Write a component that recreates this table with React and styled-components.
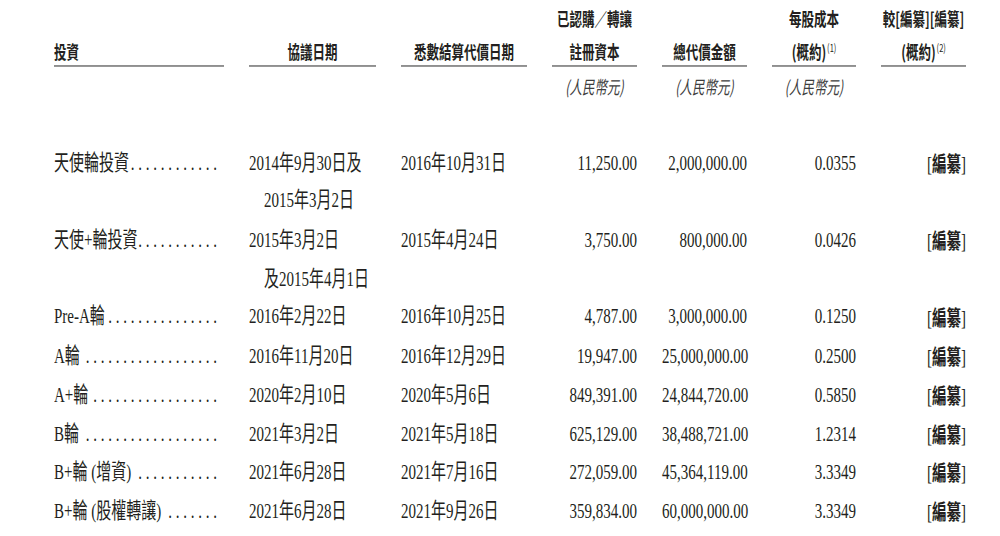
import React from 'react'
import styled, { createGlobalStyle } from 'styled-components'

const GlobalStyle = createGlobalStyle`
  html, body {
    margin: 0;
    padding: 0;
    background: #fff;
    overflow: hidden;
  }
`

// dots = leader dots shown after the round name
const rows = [
  { name: '天使輪投資', dots: 12, agree: ['2014年9月30日及', '2015年3月2日'], settle: '2016年10月31日', capital: '11,250.00', total: '2,000,000.00', cost: '0.0355' },
  { name: '天使+輪投資', dots: 11, agree: ['2015年3月2日', '及2015年4月1日'], settle: '2015年4月24日', capital: '3,750.00', total: '800,000.00', cost: '0.0426' },
  { name: 'Pre-A輪', dots: 15, agree: ['2016年2月22日'], settle: '2016年10月25日', capital: '4,787.00', total: '3,000,000.00', cost: '0.1250' },
  { name: 'A輪', dots: 18, agree: ['2016年11月20日'], settle: '2016年12月29日', capital: '19,947.00', total: '25,000,000.00', cost: '0.2500' },
  { name: 'A+輪', dots: 17, agree: ['2020年2月10日'], settle: '2020年5月6日', capital: '849,391.00', total: '24,844,720.00', cost: '0.5850' },
  { name: 'B輪', dots: 18, agree: ['2021年3月2日'], settle: '2021年5月18日', capital: '625,129.00', total: '38,488,721.00', cost: '1.2314' },
  { name: 'B+輪 (增資)', dots: 11, agree: ['2021年6月28日'], settle: '2021年7月16日', capital: '272,059.00', total: '45,364,119.00', cost: '3.3349' },
  { name: 'B+輪 (股權轉讓)', dots: 7, agree: ['2021年6月28日'], settle: '2021年9月26日', capital: '359,834.00', total: '60,000,000.00', cost: '3.3349' },
]

export default function App() {
  return (
    <Page>
      <GlobalStyle />
      <Sheet>
        <HeadRow>
          <HeadCell $left><HeadText>投資</HeadText></HeadCell>
          <HeadCell><HeadText>協議日期</HeadText></HeadCell>
          <HeadCell><HeadText>悉數結算代價日期</HeadText></HeadCell>
          <HeadCell>
            <div>已認購／轉讓</div>
            <HeadText>註冊資本</HeadText>
          </HeadCell>
          <HeadCell><HeadText>總代價金額</HeadText></HeadCell>
          <HeadCell>
            <div>每股成本</div>
            <HeadText>(概約)<Sup>(1)</Sup></HeadText>
          </HeadCell>
          <HeadCell>
            <div>較[編纂][編纂]</div>
            <HeadText>(概約)<Sup>(2)</Sup></HeadText>
          </HeadCell>
        </HeadRow>

        <UnitRow>
          <Unit $col={4}>(人民幣元)</Unit>
          <Unit $col={5}>(人民幣元)</Unit>
          <Unit $col={6}>(人民幣元)</Unit>
        </UnitRow>

        <Body>
          {rows.map(r => (
            <DataRow key={r.name} $lines={r.agree.length}>
              <Label>
                <Name>{r.name}</Name>
                <Leader>{'. '.repeat(r.dots).trim()}</Leader>
              </Label>
              <DateCell>
                {r.agree.map((line, i) => (
                  <React.Fragment key={i}>
                    {i > 0 && <br />}
                    {line}
                  </React.Fragment>
                ))}
              </DateCell>
              <DateCell>{r.settle}</DateCell>
              <Num>{r.capital}</Num>
              <Num>{r.total}</Num>
              <Num>{r.cost}</Num>
              <Num>[<Redact>編纂</Redact>]</Num>
            </DataRow>
          ))}
        </Body>
      </Sheet>
    </Page>
  )
}

const Page = styled.div`
  width: 1000px;
  height: 536px;
  overflow: hidden;
  background: #fff;
`

// the source pdf is stretched vertically, so the sheet is drawn flat and scaled
const Sheet = styled.div`
  padding: 2.4px 0 0 54px;
  transform: scaleY(1.45);
  transform-origin: 0 0;
  color: #231f20;
  font-family: "Liberation Serif", "Noto Sans CJK TC", serif;
  font-size: 15px;
`

const Grid = styled.div`
  display: grid;
  grid-template-columns: 170px 127px 126px 85px 85px 84px 85px;
  column-gap: 25px;
`

const HeadRow = styled(Grid)`
  align-items: end;
`

const HeadCell = styled.div`
  font-family: "Noto Sans CJK TC", "Liberation Sans", sans-serif;
  font-weight: 700;
  font-size: 12.5px;
  line-height: 22.8px;
  text-align: ${p => (p.$left ? 'left' : 'center')};
  border-bottom: 1.4px solid #6b6b6b;
  white-space: nowrap;
`

const HeadText = styled.div`
  margin-bottom: -2.8px;
`

const Sup = styled.sup`
  font-size: 7.5px;
  font-weight: 400;
  vertical-align: 5px;
  line-height: 0;
  margin-left: 1px;
`

const UnitRow = styled(Grid)`
  margin-top: 2.7px;
`

const Unit = styled.div`
  grid-column: ${p => p.$col};
  font-family: "Noto Sans CJK TC", "Liberation Sans", sans-serif;
  font-style: italic;
  font-size: 12.5px;
  line-height: 22.8px;
  color: #3d3d3d;
  text-align: center;
`

const Body = styled.div`
  margin-top: 27px;
`

const DataRow = styled(Grid)`
  height: ${p => p.$lines * 26.7}px;
  line-height: 26.7px;
  align-items: start;
`

const Label = styled.div`
  display: flex;
  white-space: nowrap;
  padding-right: 7px;
`

const Name = styled.span`
  flex-shrink: 0;
`

const Leader = styled.span`
  margin-left: auto;
  white-space: pre;
`

const DateCell = styled.div`
  padding-left: 1em;
  text-indent: -1em;
  white-space: nowrap;
`

const Num = styled.div`
  text-align: right;
  white-space: nowrap;
`

const Redact = styled.span`
  font-family: "Noto Sans CJK TC", sans-serif;
  font-weight: 700;
  font-size: 14.5px;
`
